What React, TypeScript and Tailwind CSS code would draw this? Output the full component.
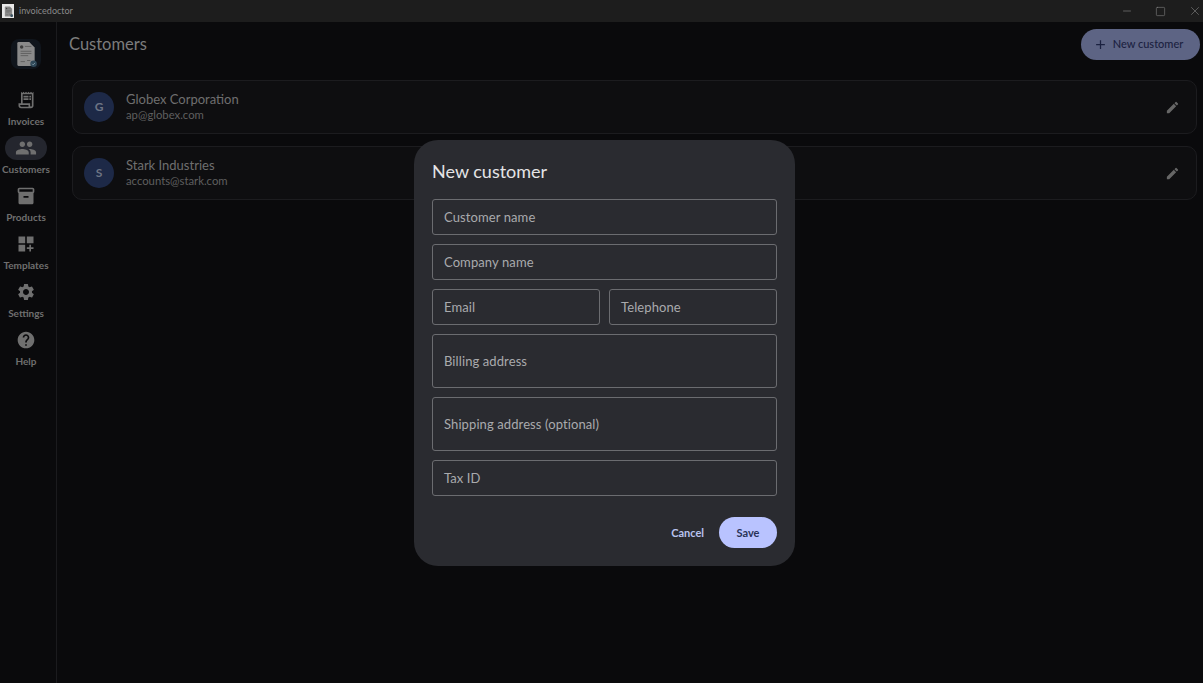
import React from "react";
import { MdAdd, MdDashboardCustomize, MdEdit, MdHelp, MdInventory2, MdOutlineReceiptLong, MdPeople, MdSettings } from "react-icons/md";
import { Minus, Square, X } from "lucide-react";

const navItems = [
  { label: "Invoices", icon: MdOutlineReceiptLong },
  { label: "Customers", icon: MdPeople, active: true },
  { label: "Products", icon: MdInventory2 },
  { label: "Templates", icon: MdDashboardCustomize },
  { label: "Settings", icon: MdSettings },
  { label: "Help", icon: MdHelp },
];

const customers = [
  { initial: "G", name: "Globex Corporation", email: "ap@globex.com" },
  { initial: "S", name: "Stark Industries", email: "accounts@stark.com" },
];

const DocLogo = ({ size }: { size: number }) => (
  <svg width={size} height={size} viewBox="0 0 24 24">
    <path d="M5 1h10l5 5v16a1 1 0 0 1-1 1H5a1 1 0 0 1-1-1V2a1 1 0 0 1 1-1z" fill="#8a8a8a" />
    <circle cx="8" cy="5.5" r="1.6" fill="#3d3d3d" />
    <path d="M11 5h6M7 9.5h10M7 11.5h10M7 13.5h7" stroke="#5c5c5c" strokeWidth="0.8" />
    <path d="M7 19h4M13 18h3" stroke="#5c5c5c" strokeWidth="0.8" />
    <circle cx="19" cy="21" r="3" fill="#2f4858" />
    <path d="M17.6 21l1 1 1.8-1.8" stroke="#8fa6b3" strokeWidth="0.7" fill="none" />
  </svg>
);

const Field = ({ label, tall, className }: { label: string; tall?: boolean; className?: string }) => (
  <div
    className={`flex items-center rounded-[3px] border border-[#6b6c70] px-[11px] pt-[1px] text-[13px] tracking-[0.1px] text-[#a9aaad] ${tall ? "h-[54px]" : "h-[36px]"} ${className ?? ""}`}
  >
    {label}
  </div>
);

export default function App() {
  return (
    <div className="relative flex h-[683px] w-[1203px] flex-col overflow-hidden bg-[#0a0a0c] font-['Lato',sans-serif]">
      {/* Title bar */}
      <div className="flex h-[22px] shrink-0 items-center bg-[#1d1d1d]">
        <div className="ml-[2px] flex h-[14px] w-[12px] items-center justify-center bg-[#e8e8e8]">
          <DocLogo size={11} />
        </div>
        <span className="ml-[5px] text-[9px] text-[#8a8a8a]">invoicedoctor</span>
        <div className="ml-auto flex items-center gap-[22px] pr-[1px] text-[#8a8a8a]">
          <Minus size={12} strokeWidth={1.2} />
          <Square size={11} strokeWidth={1.2} />
          <X size={14} strokeWidth={1} />
        </div>
      </div>

      <div className="flex min-h-0 flex-1">
        {/* Sidebar */}
        <aside className="flex w-[57px] shrink-0 flex-col items-center border-r border-[#1b1b1e] pr-[4px]">
          <div className="mt-[17px] flex h-[30px] w-[30px] items-center justify-center rounded-[8px] bg-[#10151c]">
            <DocLogo size={26} />
          </div>
          <nav className="mt-[19px] flex w-full flex-col items-center gap-[6px]">
            {navItems.map(({ label, icon: Icon, active }) => (
              <div key={label} className="flex h-[42px] w-full flex-col items-center">
                <div className={`flex h-[24px] w-[42px] items-center justify-center rounded-full ${active ? "bg-[#24262e]" : ""}`}>
                  <Icon size={active ? 22 : 20} className="text-[#6f6f6f]" />
                </div>
                <span className="mt-[2px] whitespace-nowrap text-[10px] font-bold leading-[14px] text-[#6f6f6f]">{label}</span>
              </div>
            ))}
          </nav>
        </aside>

        {/* Main */}
        <main className="flex min-w-0 flex-1 flex-col pl-[12px] pr-[6px]">
          <div className="-mr-[3px] flex h-[43px] items-center justify-between pt-[1px]">
            <h1 className="text-[16.5px] font-normal text-[#7c7c7c]">Customers</h1>
            <button className="flex h-[31px] w-[119px] items-center justify-center gap-[5px] rounded-full bg-[#5d6484] pr-[5px] text-[11px] font-medium text-[#1b2140]">
              <MdAdd size={15} />
              New customer
            </button>
          </div>
          <div className="mt-[15px] flex flex-col gap-[12px] pl-[3px]">
            {customers.map((c) => (
              <div key={c.name} className="flex h-[54px] items-center rounded-[10px] border border-[#1c1c1f] bg-[#0e0e10] pl-[11px] pr-[17px]">
                <div className="flex h-[30px] w-[30px] items-center justify-center rounded-full bg-[#1d2947] text-[12px] font-bold text-[#6d7484]">
                  {c.initial}
                </div>
                <div className="-mt-[2px] ml-[12px] flex flex-col">
                  <span className="text-[13px] leading-[17px] text-[#6f6f6f]">{c.name}</span>
                  <span className="text-[11.3px] leading-[14px] text-[#5f5f5f]">{c.email}</span>
                </div>
                <MdEdit size={15} className="ml-auto translate-x-[1px] text-[#666666]" />
              </div>
            ))}
          </div>
        </main>
      </div>

      {/* Dialog */}
      <div className="absolute left-[414px] top-[140px] flex h-[426px] w-[381px] flex-col rounded-[24px] bg-[#2a2b30] px-[18px] pt-[18px]">
        <h2 className="text-[18px] font-normal leading-[27px] text-[#e4e4e6]">New customer</h2>
        <div className="mt-[14px] flex flex-col gap-[9px]">
          <Field label="Customer name" />
          <Field label="Company name" />
          <div className="flex gap-[9px]">
            <Field label="Email" className="flex-1" />
            <Field label="Telephone" className="flex-1" />
          </div>
          <Field label="Billing address" tall />
          <Field label="Shipping address (optional)" tall />
          <Field label="Tax ID" />
        </div>
        <div className="mt-[21px] flex items-center justify-end gap-[15px]">
          <button className="pt-[1px] text-[11px] font-bold text-[#b9c3ee]">Cancel</button>
          <button className="flex h-[31px] w-[58px] items-center justify-center rounded-full bg-[#b9c3ff] pt-[1px] text-[11px] font-bold text-[#2a3358]">
            Save
          </button>
        </div>
      </div>
    </div>
  );
}
